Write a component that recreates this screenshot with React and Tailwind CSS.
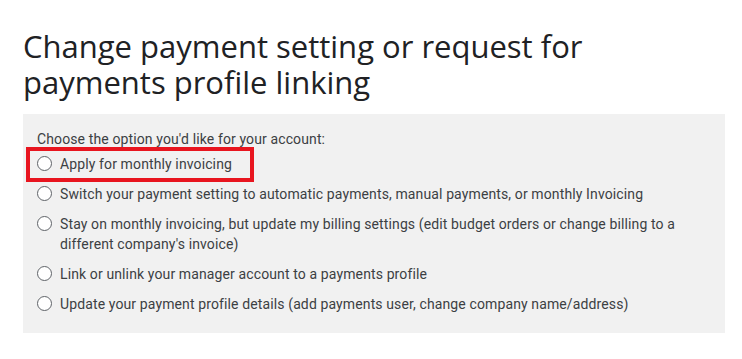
import React from 'react';

const options = [
  'Apply for monthly invoicing',
  'Switch your payment setting to automatic payments, manual payments, or monthly Invoicing',
  "Stay on monthly invoicing, but update my billing settings (edit budget orders or change billing to a different company's invoice)",
  'Link or unlink your manager account to a payments profile',
  'Update your payment profile details (add payments user, change company name/address)',
];

const Radio = () => (
  <span className="mt-[2px] block h-[15px] w-[15px] shrink-0 rounded-full border-[1.5px] border-[#5f6368] bg-white" />
);

export default function App() {
  return (
    <div className="min-h-screen bg-white pl-[23px] pr-[17px] pt-[28px]">
      <h1
        className="text-[31px] leading-[36px] text-[#202124]"
        style={{ fontFamily: '"Open Sans", sans-serif' }}
      >
        Change payment setting or request for
        <br />
        payments profile linking
      </h1>
      <div
        className="mt-[14px] bg-[#f1f1f1] px-[14px] pb-[19px] pt-[15px] text-[14px] leading-[20px] tracking-[0.12px] text-[#3c4043]"
        style={{ fontFamily: 'Roboto, sans-serif' }}
      >
        <p className="mb-[5px]">Choose the option you'd like for your account:</p>
        <div className="flex flex-col gap-[10px]">
          {options.map((opt, i) => (
            <label key={i} className="relative flex gap-[8px]">
              <Radio />
              <span>{opt}</span>
              {i === 0 && (
                <span className="absolute left-[-11px] top-[-7px] h-[35px] w-[228px] border-4 border-[#e8151f]" />
              )}
            </label>
          ))}
        </div>
      </div>
    </div>
  );
}
